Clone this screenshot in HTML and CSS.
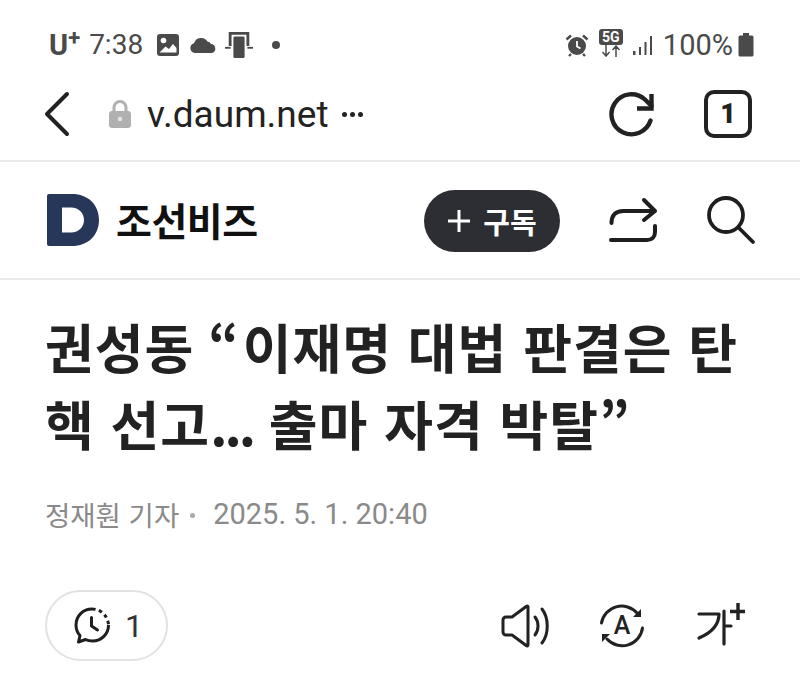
FILE: index.html
```html
<!DOCTYPE html>
<html lang="ko">
<head>
<meta charset="utf-8">
<title>조선비즈</title>
<link rel="stylesheet" href="styles.css">
</head>
<body>
<div class="status">
  <div class="status-left">
    <span class="carrier">U<sup class="plus">+</sup></span>
    <span class="clock">7:38</span>
    <svg class="ic-photo" width="24" height="24" viewBox="0 0 24 24"><rect x="1" y="1" width="22" height="22" rx="3" fill="#4a4a4a"/><circle cx="7.500" cy="7.500" r="2.800" fill="#fff"/><path d="M3.500 19.500l6-6 3.500 2.500 4-5 3.500 4v4.500z" fill="#fff"/></svg>
    <svg class="ic-cloud" width="28" height="18" viewBox="0 0 28 18"><path d="M6 17a5 5 0 0 1-1-9.800A7.500 7.500 0 0 1 18.500 5.500 4.500 4.500 0 0 1 22 8a4.600 4.600 0 0 1 1 9z" fill="#4a4a4a"/></svg>
    <svg class="ic-dex" width="28" height="28" viewBox="0 0 30 30"><path d="M4 1h22v15h-3V4H7v12H4z" fill="#4a4a4a"/><rect x="0" y="17" width="6" height="2" fill="#4a4a4a"/><rect x="24" y="17" width="6" height="2" fill="#4a4a4a"/><rect x="9" y="6" width="12" height="23" rx="1.500" fill="#4a4a4a"/></svg>
    <span class="dot"></span>
  </div>
  <div class="status-right">
    <svg class="ic-alarm" width="24" height="24" viewBox="0 0 24 24"><circle cx="12" cy="13" r="9" fill="#4a4a4a"/><path d="M12 8v5.500l3.500 2" fill="none" stroke="#fff" stroke-width="1.800"/><path d="M1.500 6.500L6 2.500M22.500 6.500L18 2.500M6 21l-2 2M18 21l2 2" stroke="#4a4a4a" stroke-width="2.400" fill="none"/></svg>
    <div class="net">
      <span class="fiveg">5G</span>
      <svg width="24" height="12" viewBox="0 0 24 12"><path d="M7 0v10M3.500 7L7 11l3.500-4M17 12V2M13.500 5L17 1l3.500 4" fill="none" stroke="#4a4a4a" stroke-width="1.500"/></svg>
    </div>
    <svg class="ic-signal" width="22" height="22" viewBox="0 0 22 22"><rect x="1" y="17" width="2.500" height="4" fill="#4a4a4a"/><rect x="7" y="13" width="2" height="8" fill="#4a4a4a"/><rect x="12.500" y="8" width="2" height="13" fill="#4a4a4a"/><rect x="18" y="2" width="2" height="19" fill="#4a4a4a"/></svg>
    <span class="percent">100%</span>
    <svg class="ic-batt" width="16" height="24" viewBox="0 0 16 24"><path d="M5 0h6v2.500h3a1.500 1.500 0 0 1 1.500 1.500v18a1.500 1.500 0 0 1-1.500 1.500H2A1.500 1.500 0 0 1 .5 22V4A1.500 1.500 0 0 1 2 2.500h3z" fill="#4a4a4a"/></svg>
  </div>
</div>

<div class="toolbar">
  <svg class="ic-back" width="28" height="46" viewBox="0 0 28 46"><path d="M23 3L3 23l20 20" fill="none" stroke="#222" stroke-width="4" stroke-linecap="round" stroke-linejoin="round"/></svg>
  <svg class="ic-lock" width="24" height="30" viewBox="0 0 24 30"><path d="M6 13V8.500a6 6 0 0 1 12 0V13" fill="none" stroke="#b0b0b0" stroke-width="3"/><rect x="1" y="12" width="22" height="17" rx="3" fill="#b0b0b0"/><circle cx="12" cy="20" r="2.200" fill="#e6e6e6"/></svg>
  <span class="url">v.daum.net</span>
  <span class="dots"><i></i><i></i><i></i></span>
  <span class="spacer"></span>
  <svg class="ic-reload" width="46" height="46" viewBox="0 0 46 46"><path d="M42.500 29.500A20 20 0 1 1 37 8.500l6.500 6.500" fill="none" stroke="#222" stroke-width="4.400" stroke-linecap="round"/><path d="M43.500 3v14.500H29" fill="none" stroke="#222" stroke-width="4.400"/></svg>
  <span class="tabs">1</span>
</div>

<header class="site">
  <svg class="logo" width="52" height="52" viewBox="0 0 52 54" preserveAspectRatio="none"><path fill-rule="evenodd" d="M0 2a2 2 0 0 1 2-2h23c16 0 27 11 27 27S41 54 25 54H2a2 2 0 0 1-2-2zM15 14v26h9c8 0 13-6 13-13s-5-13-13-13z" fill="#26375a"/></svg>
  <span class="brand">조선비즈</span>
  <span class="spacer"></span>
  <button class="sub"><svg width="24" height="24" viewBox="0 0 24 24"><path d="M12 1v22M1 12h22" stroke="#fff" stroke-width="3" fill="none"/></svg><span>구독</span></button>
  <svg class="ic-share" width="50" height="46" viewBox="0 0 50 46"><path d="M3.500 26C3.500 18 8 14 15 14h32M36 3l11 11-11 9" fill="none" stroke="#1e1e1e" stroke-width="4" stroke-linecap="round" stroke-linejoin="round"/><path d="M47 29v6c0 5-3 8-8 8H3" fill="none" stroke="#1e1e1e" stroke-width="4" stroke-linecap="round"/></svg>
  <svg class="ic-search" width="50" height="50" viewBox="0 0 50 50"><circle cx="20" cy="20" r="17" fill="none" stroke="#1e1e1e" stroke-width="3.800"/><path d="M33 33l14 14" stroke="#1e1e1e" stroke-width="3.800" stroke-linecap="round"/></svg>
</header>

<main class="article">
  <h1 class="title">권성동 <span class="open">“</span>이재명 대법 판결은 탄<br>핵 선고<span class="ell">...</span> 출마 자격 박탈<span class="close">”</span></h1>
  <div class="meta"><span>정재훤 기자</span><span class="sep"></span><span class="date">2025. 5. 1. 20:40</span></div>
  <div class="actions">
    <div class="pill">
      <svg width="40" height="38" viewBox="0 0 40 38"><path d="M18 2C9 2 2 9 2 18c0 4 1.500 8 4 10.500L4.500 35l7-2.500c2 1 4.500 1.500 7 1.500 9 0 16-7 16-16" fill="none" stroke="#1e1e1e" stroke-width="3" stroke-linejoin="round"/><path d="M18 2c9 0 16 7 16.500 16" fill="none" stroke="#1e1e1e" stroke-width="3" stroke-dasharray="3.500 3.500"/><path d="M17.500 10.500V19l6 4" fill="none" stroke="#1e1e1e" stroke-width="3" stroke-linecap="round" stroke-linejoin="round"/></svg>
      <span class="count">1</span>
    </div>
    <span class="spacer"></span>
    <svg class="ic-sound" width="50" height="44" viewBox="0 0 50 44"><path d="M27 3v38a1 1 0 0 1-1.500.8L11 31H5a3 3 0 0 1-3-3V16a3 3 0 0 1 3-3h6L25.500 2.200A1 1 0 0 1 27 3z" fill="none" stroke="#222" stroke-width="3" stroke-linejoin="round"/><path d="M34 13c4 5 4 13 0 18" fill="none" stroke="#222" stroke-width="3" stroke-linecap="round"/><path d="M41 5c7 9 7 25 0 34" fill="none" stroke="#222" stroke-width="3" stroke-linecap="round"/></svg>
    <svg class="ic-trans" width="46" height="46" viewBox="0 0 46 46"><path d="M2.500 20A20.500 20.500 0 0 1 38 10" fill="none" stroke="#222" stroke-width="3" stroke-linecap="round"/><path d="M43.500 25A20.500 20.500 0 0 1 8 36" fill="none" stroke="#222" stroke-width="3" stroke-linecap="round"/><path d="M42 6v8h-8zM3 39v-8h8z" fill="#222"/><text x="23" y="31" class="trans-a">A</text></svg>
    <svg class="ic-font" width="50" height="46" viewBox="0 0 50 46"><path d="M3 11h20c0 10-6 18-20 24" fill="none" stroke="#222" stroke-width="3.200" stroke-linecap="round" stroke-linejoin="round"/><path d="M28 8v33M28 23h7" fill="none" stroke="#222" stroke-width="3.200" stroke-linecap="round"/><path d="M42 0v17M34 8.500h15" fill="none" stroke="#222" stroke-width="3.400"/></svg>
  </div>
</main>
</body>
</html>
```
FILE: styles.css
```css
* { box-sizing: border-box; }
html, body { margin: 0; padding: 0; }
body {
  width: 800px;
  height: 680px;
  overflow: hidden;
  background: #fff;
  color: #222;
  font-family: Roboto, "Noto Sans CJK KR", sans-serif;
}
svg { display: block; flex: none; }
.spacer { flex: 1; }

.status {
  height: 70px;
  padding: 20px 46px 0 49px;
  display: flex;
  justify-content: space-between;
  align-items: center;
  color: #4a4a4a;
}
.status-left, .status-right { display: flex; align-items: center; }
.carrier { font-size: 29px; font-weight: 700; line-height: 30px; display: flex; }
.plus { font-size: 22px; line-height: 16px; margin: 0; vertical-align: baseline; font-weight: 700; }
.clock { font-size: 28px; margin-left: 9px; line-height: 34px; }
.ic-photo { margin-left: 13px; }
.ic-cloud { margin-left: 9px; }
.ic-dex { margin-left: 8px; }
.dot { width: 8px; height: 8px; border-radius: 50%; background: #4a4a4a; margin-left: 19px; }
.ic-alarm { margin-right: 9px; }
.net { display: flex; flex-direction: column; align-items: center; width: 26px; margin-top: -4px; }
.fiveg {
  width: 24px;
  height: 16px;
  background: #4a4a4a;
  color: #fff;
  border-radius: 3px;
  font-size: 14px;
  font-weight: 700;
  line-height: 16px;
  text-align: center;
}
.ic-signal { margin-left: 8px; }
.percent { font-size: 29px; margin-left: 9px; line-height: 34px; }
.ic-batt { margin-left: 5px; }

.toolbar {
  height: 92px;
  padding: 0 48px 2px 44px;
  display: flex;
  align-items: center;
  border-bottom: 2px solid #e9e9e9;
}
.ic-lock { margin-left: 36px; }
.url { font-size: 37px; color: #222; margin-left: 15px; }
.dots { display: flex; gap: 3px; margin-left: 13px; }
.dots i { width: 5px; height: 5px; border-radius: 50%; background: #222; display: block; }
.tabs {
  width: 48px;
  height: 48px;
  margin-left: 50px;
  border: 4px solid #222;
  border-radius: 10px;
  display: flex;
  align-items: center;
  justify-content: center;
  font-size: 27px;
  font-weight: 900;
  color: #222;
}

.site {
  height: 118px;
  padding: 0 44px 0 47px;
  display: flex;
  align-items: center;
  border-bottom: 2px solid #e9e9e9;
}
.brand { font-size: 39px; font-weight: 700; color: #111; margin: 0 0 3px 17px; letter-spacing: -0.5px; }
.sub {
  width: 136px;
  height: 62px;
  margin-top: 2px;
  border: 0;
  border-radius: 31px;
  background: #2d2e33;
  color: #fff;
  font: 700 29px "Noto Sans CJK KR", sans-serif;
  display: flex;
  align-items: center;
  justify-content: center;
  gap: 12px;
  padding: 0;
}
.ic-share { margin-left: 48px; }
.ic-search { margin-left: 48px; }

.article { padding: 28px 45px 0; }
.title {
  margin: 0;
  font-family: "Noto Sans CJK KR", sans-serif;
  font-size: 53px;
  font-weight: 700;
  line-height: 77px;
  color: #222;
  letter-spacing: 1px;
  white-space: nowrap;
}
.open { letter-spacing: 4px; margin-left: -2px; }
.ell { letter-spacing: -3px; }
.close { letter-spacing: -4px; }
.meta {
  margin-top: 32px;
  display: flex;
  align-items: center;
  height: 40px;
  font-size: 27.500px;
  color: #8a8a8a;
  font-family: "Noto Sans CJK KR", sans-serif;
}
.sep { width: 5px; height: 5px; background: #aaa; border-radius: 50%; margin: 2px 18px 0 11px; }
.date { font-family: Roboto, sans-serif; font-size: 29px; }

.actions { margin-top: 56px; display: flex; align-items: center; padding-right: 9px; }
.pill {
  width: 123px;
  height: 71px;
  border: 2px solid #e2e2e2;
  border-radius: 36px;
  display: flex;
  align-items: center;
  padding-left: 27px;
  gap: 11px;
}
.count { font-size: 32px; color: #333; }
.ic-trans { margin-left: 48px; }
.ic-font { margin-left: 51px; }
.trans-a { font-family: Roboto, sans-serif; font-size: 25px; font-weight: 500; fill: #222; text-anchor: middle; }
```
